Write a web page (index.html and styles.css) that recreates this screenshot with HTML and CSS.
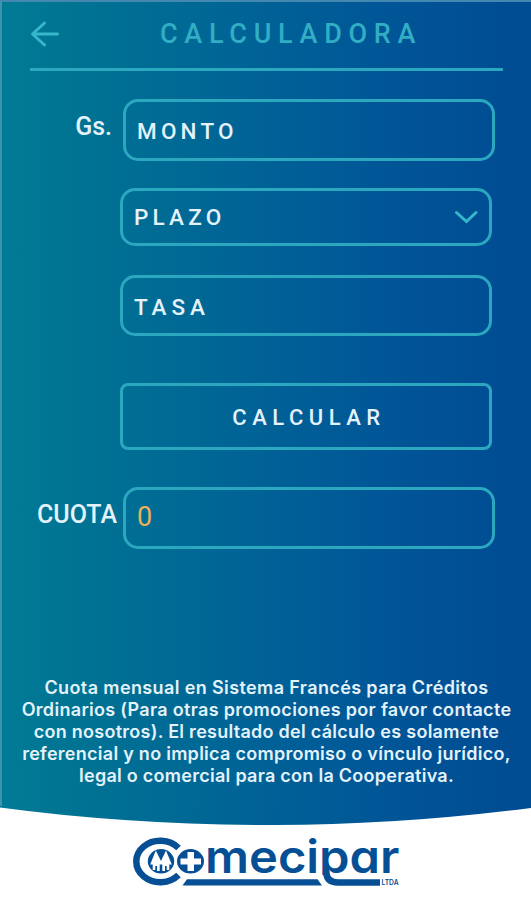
FILE: index.html
```html
<!DOCTYPE html>
<html lang="es">
<head>
<meta charset="utf-8">
<title>Calculadora</title>
<link rel="stylesheet" href="styles.css">
</head>
<body>
<main class="screen">
  <header class="header">
    <svg class="back" width="30" height="28" viewBox="0 0 30 28"><path d="M27.500 14H3M14.500 3L2.500 14L14.500 25"/></svg>
    <h1 class="title">CALCULADORA</h1>
  </header>
  <form class="form">
    <div class="row amount"><label class="label">Gs.</label><div class="field wide">MONTO</div></div>
    <div class="field term">PLAZO
      <svg class="chevron" width="24" height="15" viewBox="0 0 24 15"><path d="M2.500 2.500L12.500 11.500L22 2.500"/></svg>
    </div>
    <div class="field rate">TASA</div>
    <button class="calculate" type="button">CALCULAR</button>
    <div class="row result"><label class="label total">CUOTA</label><div class="field wide value">0</div></div>
  </form>
  <p class="note">
    <span class="l1">Cuota mensual en Sistema Francés para Créditos</span>
    <span class="l2">Ordinarios (Para otras promociones por favor contacte</span>
    <span class="l3">con nosotros). El resultado del cálculo es solamente</span>
    <span class="l4">referencial y no implica compromiso o vínculo jurídico,</span>
    <span class="l5">legal o comercial para con la Cooperativa.</span>
  </p>
</main>
<footer class="footer">
  <svg width="531" height="94" viewBox="0 806 531 94">
    <defs>
      <linearGradient id="sea" gradientUnits="userSpaceOnUse" x1="0" y1="0" x2="531" y2="0"><stop offset="0" stop-color="#007b95"/><stop offset=".14" stop-color="#007393"/><stop offset=".45" stop-color="#006496"/><stop offset=".72" stop-color="#005697"/><stop offset=".94" stop-color="#004d93"/><stop offset="1" stop-color="#004d91"/></linearGradient>
      <clipPath id="baseline"><rect x="200" y="830" width="205" height="45"/></clipPath>
    </defs>
    <path d="M0 806H531V808Q400 825 275 825Q130 825 0 807.500Z" fill="url(#sea)"/>
    <g fill="none" stroke="#064f94" stroke-width="6.500">
      <path d="M178.500 848A24 20.700 0 1 0 178.500 875"/>
      <path d="M326.300 868V872Q326.300 882.400 338 882.400H380" stroke-width="6.500"/>
    </g>
    <g fill="#064f94">
      <ellipse cx="161" cy="861.300" rx="13.200" ry="12.200"/>
      <ellipse cx="190.500" cy="861.300" rx="13.500" ry="12.200"/>
      <path d="M187 879.300H317.500L322 885.500H182.500Z"/>
      <g clip-path="url(#baseline)"><text class="brand" x="205" y="873.300" textLength="194.500" lengthAdjust="spacingAndGlyphs">mecipar</text></g>
      <text class="ltda" x="381.500" y="885.300" textLength="17" lengthAdjust="spacingAndGlyphs">LTDA</text>
    </g>
    <g fill="#fff">
      <path d="M187.500 852H194V858.500H201V864.500H194V871H187.500V864.500H180.500V858.500H187.500Z"/>
      <path d="M155.800 850.500L161 861L166 850.500L171.800 864.500H169.300V870H166.700V866H165V871H162.300V864.500H159.700V871H157V866H155.300V870H152.700V864.500H150.200Z"/>
    </g>
  </svg>
</footer>
</body>
</html>
```
FILE: styles.css
```css
* { box-sizing: border-box; }
body {
  margin: 0;
  width: 531px;
  height: 900px;
  overflow: hidden;
  background: #fff;
  font-family: Roboto, "Liberation Sans", sans-serif;
  color: #e3f2fb;
}
.screen {
  height: 806px;
  border-top: 2px solid #4288b0;
  border-left: 2px solid #3e94af;
  background: linear-gradient(90deg, #007b95 0%, #007393 14%, #006496 45%, #005697 72%, #004d93 94%, #004d91 100%);
}
.header {
  display: flex;
  margin: 0 28px 0 28px;
  width: 473px;
  height: 69px;
  border-bottom: 3px solid #2ba7bf;
}
.back { margin-top: 18px; fill: none; stroke: #36b7cb; stroke-width: 3; stroke-linecap: round; stroke-linejoin: round; }
.title { margin: 16px 0 0 100px; font-size: 27px; line-height: 32px; font-weight: 500; letter-spacing: 6.700px; color: #31adc4; }
.form { width: 493px; margin-top: 28px; display: flex; flex-direction: column; align-items: flex-end; }
.row { display: flex; }
.field {
  display: flex;
  align-items: center;
  width: 372px;
  margin-right: 3px;
  padding: 0 11px;
  border: 3px solid #2ba7bf;
  border-radius: 15px;
  font-size: 22.500px;
  font-weight: 500;
  letter-spacing: 4.200px;
}
.wide { height: 62px; margin-right: 0; }
.amount .wide { padding-top: 2px; }
.label { font-size: 25px; font-weight: 500; line-height: 30px; margin: 13px 11px 0 0; }
.label.total { margin-right: 6px; letter-spacing: 0; }
.term { margin-top: 27px; height: 58px; justify-content: space-between; }
.chevron { fill: none; stroke: #36b7cb; stroke-width: 3; stroke-linecap: round; }
.rate { margin-top: 29px; height: 61px; padding-top: 3px; letter-spacing: 4.900px; }
.calculate {
  width: 372px;
  height: 67px;
  margin: 47px 3px 0 0;
  padding: 2px 0 0 6px;
  border: 3px solid #2ba7bf;
  border-radius: 8px;
  background: none;
  color: inherit;
  font: 500 22px Roboto, "Liberation Sans", sans-serif;
  letter-spacing: 5.500px;
}
.result { margin-top: 37px; }
.value { padding-bottom: 2px; font-size: 27px; font-weight: 400; color: #eab15b; }
.note {
  display: flex;
  flex-direction: column;
  align-items: center;
  margin: 128px 0 0;
  font: 600 18px/22px Inter, "Liberation Sans", sans-serif;
  white-space: nowrap;
}
.l1 { letter-spacing: .38px; }
.l2 { letter-spacing: .31px; }
.l3, .l4, .l5 { letter-spacing: .27px; }
.footer { height: 94px; }
.footer svg { display: block; }
.brand { font: 600 45px Inter, sans-serif; font-feature-settings: "cv11"; }
.ltda { font: 600 7px Inter, sans-serif; }
```
